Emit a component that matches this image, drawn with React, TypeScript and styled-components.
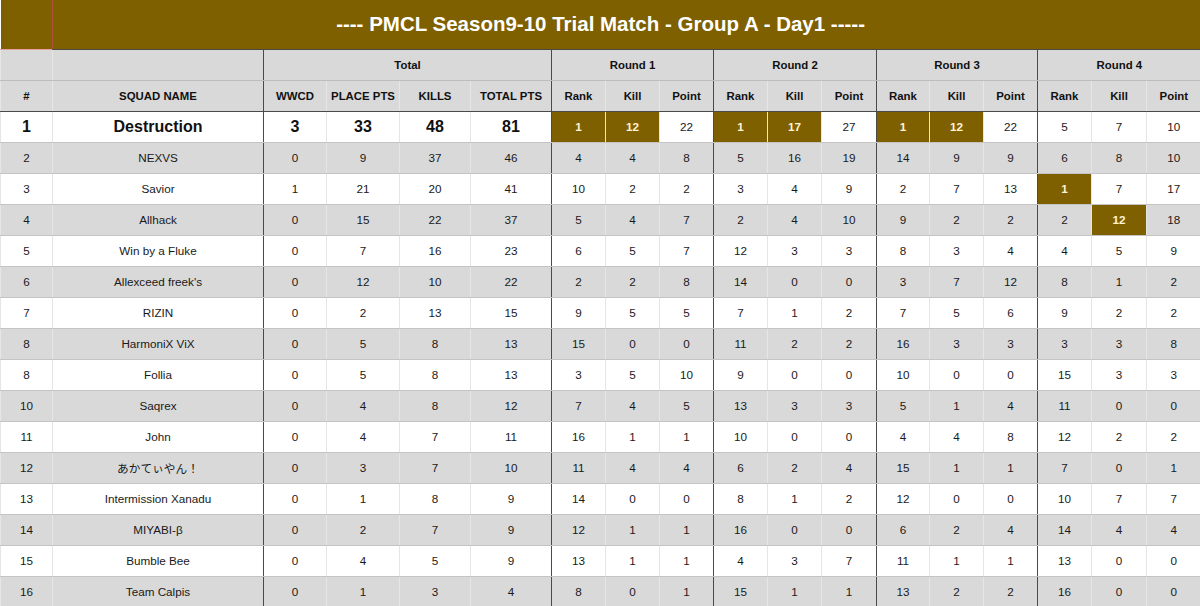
import React from "react";
import styled, { createGlobalStyle, css } from "styled-components";

const GlobalStyle = createGlobalStyle`
  html, body { margin: 0; padding: 0; background: #ffffff; }
  body { font-family: "Liberation Sans", Arial, sans-serif; }
`;

const GOLD = "#7f6000";
const GRAY = "#d9d9d9";
const DARK = "#4a4a4a";

const Sheet = styled.div`
  position: relative;
  width: 1200px;
  height: 606px;
  overflow: hidden;
`;

const Table = styled.table`
  width: 1200px;
  table-layout: fixed;
  border-collapse: collapse;
  border-spacing: 0;
  font-family: "Liberation Sans", Arial, sans-serif;
  color: #111;
`;

const TitleRow = styled.tr`
  height: 49px;
`;

const TitleCell = styled.td`
  background: ${GOLD};
  color: #ffffff;
  font-size: 20.5px;
  font-weight: 700;
  text-align: center;
  vertical-align: middle;
  padding: 0;
  border-bottom: 1px solid ${DARK};
`;

const HeadRow = styled.tr`
  height: 31px;
`;

const HeadCell = styled.th<{ $groupEnd?: boolean; $bottomDark?: boolean }>`
  background: ${GRAY};
  font-size: 11.4px;
  font-weight: 700;
  text-align: center;
  vertical-align: middle;
  padding: 0;
  white-space: nowrap;
  border-left: 1px solid #e6e6e6;
  border-bottom: 1px solid ${(p) => (p.$bottomDark ? DARK : "#bdbdbd")};
  ${(p) =>
    p.$groupEnd &&
    css`
      border-left: 1px solid ${DARK};
    `}
`;

const DataRow = styled.tr<{ $shaded: boolean }>`
  height: 31px;
  background: ${(p) => (p.$shaded ? GRAY : "#ffffff")};
`;

const Cell = styled.td<{ $groupEnd?: boolean; $hl?: boolean; $big?: boolean }>`
  padding: 0;
  text-align: center;
  vertical-align: middle;
  white-space: nowrap;
  font-size: 11.7px;
  color: #1a1a1a;
  border-left: 1px solid #e6e6e6;
  border-bottom: 1px solid #c4c4c4;
  ${(p) =>
    p.$groupEnd &&
    css`
      border-left: 1px solid ${DARK};
    `}
  ${(p) =>
    p.$big &&
    css`
      font-size: 16px;
      font-weight: 700;
      color: #111;
    `}
  ${(p) =>
    p.$hl &&
    css`
      background: ${GOLD};
      color: #fff4d6;
      font-weight: 700;
      font-size: 11.7px;
    `}
`;

const SelectionMark = styled.span`
  position: absolute;
  left: 52px;
  top: 0;
  width: 1px;
  height: 49px;
  background: #c0504d;
  opacity: 0.7;
  pointer-events: none;
`;

const SelectionBase = styled.span`
  position: absolute;
  left: 0;
  top: 49px;
  width: 52px;
  height: 1px;
  background: #e8a0a0;
  pointer-events: none;
`;

const NameText = styled.span`
  font-family: "Liberation Sans", Arial, "Noto Sans CJK JP", sans-serif;
`;

const widths = [52, 211, 63, 73, 71, 81, 54, 54, 54, 54, 54, 55, 53, 54, 54, 54, 55, 54];
const groupStarts = new Set([2, 6, 9, 12, 15]);

type Row = {
  pos: string;
  name: string;
  total: number[];
  rounds: number[][];
  hl?: number[];
};

const rows: Row[] = [
  { pos: "1", name: "Destruction", total: [3, 33, 48, 81], rounds: [[1, 12, 22], [1, 17, 27], [1, 12, 22], [5, 7, 10]], hl: [0, 1, 3, 4, 6, 7] },
  { pos: "2", name: "NEXVS", total: [0, 9, 37, 46], rounds: [[4, 4, 8], [5, 16, 19], [14, 9, 9], [6, 8, 10]] },
  { pos: "3", name: "Savior", total: [1, 21, 20, 41], rounds: [[10, 2, 2], [3, 4, 9], [2, 7, 13], [1, 7, 17]], hl: [9] },
  { pos: "4", name: "Allhack", total: [0, 15, 22, 37], rounds: [[5, 4, 7], [2, 4, 10], [9, 2, 2], [2, 12, 18]], hl: [10] },
  { pos: "5", name: "Win by a Fluke", total: [0, 7, 16, 23], rounds: [[6, 5, 7], [12, 3, 3], [8, 3, 4], [4, 5, 9]] },
  { pos: "6", name: "Allexceed freek's", total: [0, 12, 10, 22], rounds: [[2, 2, 8], [14, 0, 0], [3, 7, 12], [8, 1, 2]] },
  { pos: "7", name: "RIZIN", total: [0, 2, 13, 15], rounds: [[9, 5, 5], [7, 1, 2], [7, 5, 6], [9, 2, 2]] },
  { pos: "8", name: "HarmoniX ViX", total: [0, 5, 8, 13], rounds: [[15, 0, 0], [11, 2, 2], [16, 3, 3], [3, 3, 8]] },
  { pos: "8", name: "Follia", total: [0, 5, 8, 13], rounds: [[3, 5, 10], [9, 0, 0], [10, 0, 0], [15, 3, 3]] },
  { pos: "10", name: "Saqrex", total: [0, 4, 8, 12], rounds: [[7, 4, 5], [13, 3, 3], [5, 1, 4], [11, 0, 0]] },
  { pos: "11", name: "John", total: [0, 4, 7, 11], rounds: [[16, 1, 1], [10, 0, 0], [4, 4, 8], [12, 2, 2]] },
  { pos: "12", name: "あかてぃやん！", total: [0, 3, 7, 10], rounds: [[11, 4, 4], [6, 2, 4], [15, 1, 1], [7, 0, 1]] },
  { pos: "13", name: "Intermission Xanadu", total: [0, 1, 8, 9], rounds: [[14, 0, 0], [8, 1, 2], [12, 0, 0], [10, 7, 7]] },
  { pos: "14", name: "MIYABI-β", total: [0, 2, 7, 9], rounds: [[12, 1, 1], [16, 0, 0], [6, 2, 4], [14, 4, 4]] },
  { pos: "15", name: "Bumble Bee", total: [0, 4, 5, 9], rounds: [[13, 1, 1], [4, 3, 7], [11, 1, 1], [13, 0, 0]] },
  { pos: "16", name: "Team Calpis", total: [0, 1, 3, 4], rounds: [[8, 0, 1], [15, 1, 1], [13, 2, 2], [16, 0, 0]] },
];

export default function App() {
  const subHeads = ["#", "SQUAD NAME", "WWCD", "PLACE PTS", "KILLS", "TOTAL PTS"];
  const roundHeads = ["Rank", "Kill", "Point"];
  return (
    <Sheet>
      <GlobalStyle />
      <Table>
        <colgroup>
          {widths.map((w, i) => (
            <col key={i} style={{ width: w }} />
          ))}
        </colgroup>
        <tbody>
          <TitleRow>
            <TitleCell colSpan={18}>---- PMCL Season9-10 Trial Match - Group A - Day1 -----</TitleCell>
          </TitleRow>
          <HeadRow>
            <HeadCell />
            <HeadCell />
            <HeadCell colSpan={4} $groupEnd>
              Total
            </HeadCell>
            {[1, 2, 3, 4].map((r) => (
              <HeadCell key={r} colSpan={3} $groupEnd>
                Round {r}
              </HeadCell>
            ))}
          </HeadRow>
          <HeadRow>
            {subHeads.map((h, i) => (
              <HeadCell key={h} $groupEnd={groupStarts.has(i)} $bottomDark>
                {h}
              </HeadCell>
            ))}
            {[0, 1, 2, 3].map((r) =>
              roundHeads.map((h, j) => (
                <HeadCell key={`${r}-${h}`} $groupEnd={j === 0} $bottomDark>
                  {h}
                </HeadCell>
              ))
            )}
          </HeadRow>
          {rows.map((row, ri) => {
            const big = ri === 0;
            const flat = row.rounds.flat();
            return (
              <DataRow key={ri} $shaded={ri % 2 === 1}>
                <Cell $big={big}>{row.pos}</Cell>
                <Cell $big={big}>
                  <NameText>{row.name}</NameText>
                </Cell>
                {row.total.map((v, i) => (
                  <Cell key={`t${i}`} $big={big} $groupEnd={i === 0}>
                    {v}
                  </Cell>
                ))}
                {flat.map((v, i) => (
                  <Cell key={`r${i}`} $groupEnd={i % 3 === 0} $hl={row.hl?.includes(i)}>
                    {v}
                  </Cell>
                ))}
              </DataRow>
            );
          })}
        </tbody>
      </Table>
      <SelectionMark />
      <SelectionBase />
    </Sheet>
  );
}
